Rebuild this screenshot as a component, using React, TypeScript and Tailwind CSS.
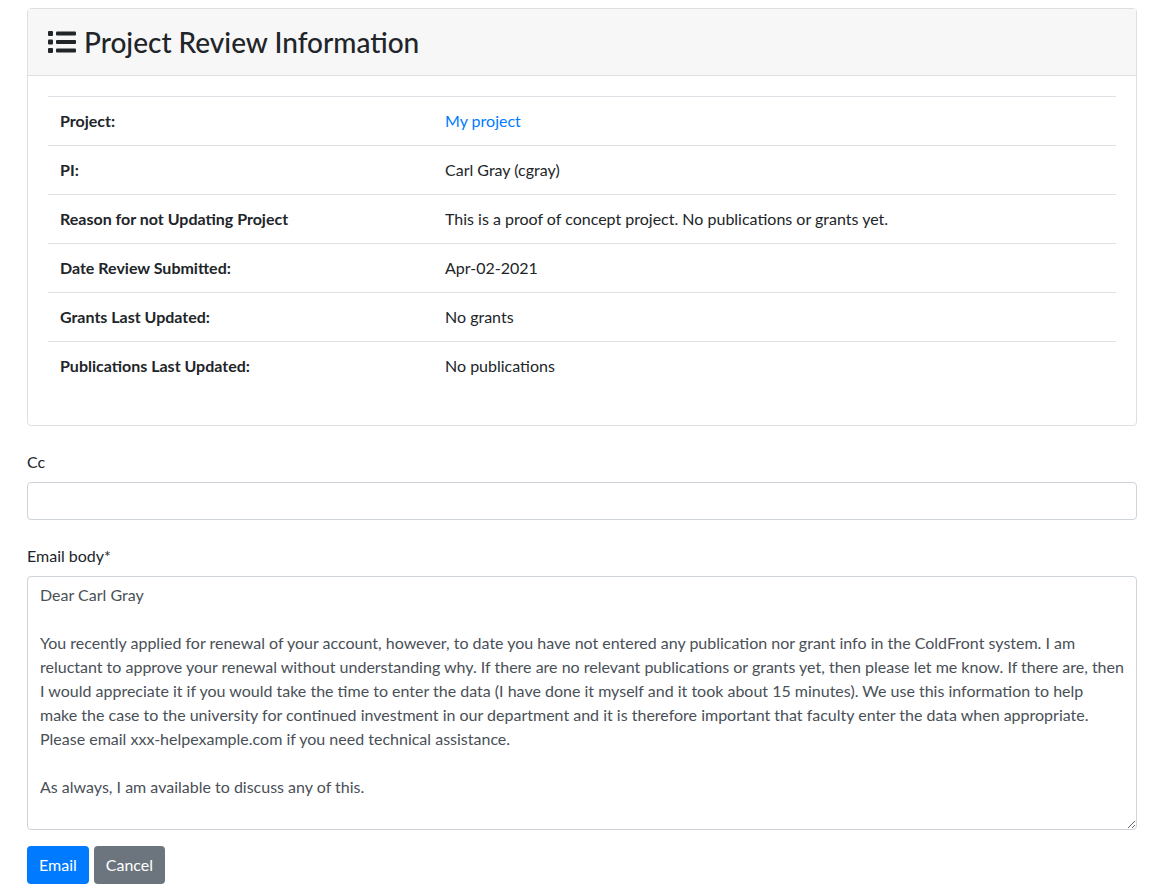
import React from "react";

const rows: [string, React.ReactNode][] = [
  ["Project:", <a className="text-[#007bff]">My project</a>],
  ["PI:", "Carl Gray (cgray)"],
  ["Reason for not Updating Project", "This is a proof of concept project. No publications or grants yet."],
  ["Date Review Submitted:", "Apr-02-2021"],
  ["Grants Last Updated:", "No grants"],
  ["Publications Last Updated:", "No publications"],
];

const body = `Dear Carl Gray

You recently applied for renewal of your account, however, to date you have not entered any publication nor grant info in the ColdFront system. I am reluctant to approve your renewal without understanding why. If there are no relevant publications or grants yet, then please let me know. If there are, then I would appreciate it if you would take the time to enter the data (I have done it myself and it took about 15 minutes). We use this information to help make the case to the university for continued investment in our department and it is therefore important that faculty enter the data when appropriate. Please email xxx-helpexample.com if you need technical assistance.

As always, I am available to discuss any of this.

Best regards
Director





`;

export default function App() {
  return (
    <div className="h-[896px] overflow-hidden pl-[27px] pr-[13px] pt-[8px] text-[16px] text-[#212529]" style={{ fontFamily: 'Lato, sans-serif' }}>
      <div className="border border-[#dfdfdf] rounded-[4px]">
        <div className="bg-[#f7f7f7] border-b border-[#dfdfdf] h-[67px] px-[20px] flex items-center gap-[8px]">
          <svg width="28" height="24" viewBox="0 0 28 24" fill="#212529">
            <rect x="0" y="1" width="5" height="5" rx="1" />
            <rect x="0" y="9.5" width="5" height="5" rx="1" />
            <rect x="0" y="18" width="5" height="5" rx="1" />
            <rect x="8" y="1.5" width="20" height="4" rx="1" />
            <rect x="8" y="10" width="20" height="4" rx="1" />
            <rect x="8" y="18.5" width="20" height="4" rx="1" />
          </svg>
          <h3 className="text-[28px] font-medium leading-none">Project Review Information</h3>
        </div>
        <div className="px-[20px] pt-[20px] pb-[34px]">
          <table className="w-full">
            <tbody>
              {rows.map(([k, v]) => (
                <tr key={k} className="border-t border-[#dee2e6] h-[49px]">
                  <td className="px-[12px] font-bold w-[385px]">{k}</td>
                  <td className="px-[12px]">{v}</td>
                </tr>
              ))}
            </tbody>
          </table>
        </div>
      </div>
      <div className="mt-[24px]">
        <label className="block mb-[8px] leading-[24px]">Cc</label>
        <input className="block w-full h-[38px] border border-[#ced4da] rounded-[4px] px-[12px]" />
      </div>
      <div className="mt-[24px]">
        <label className="block mb-[8px] leading-[24px]">Email body*</label>
        <textarea
          className="block w-full h-[254px] border border-[#ced4da] rounded-[4px] px-[12px] py-[6px] leading-[24px] text-[#495057] overflow-y-scroll"
          defaultValue={body}
        />
      </div>
      <div className="mt-[16px] flex gap-[5px]">
        <button className="bg-[#007bff] text-white rounded-[4px] h-[38px] px-[12px]">Email</button>
        <button className="bg-[#6c757d] text-white rounded-[4px] h-[38px] px-[12px]">Cancel</button>
      </div>
    </div>
  );
}
